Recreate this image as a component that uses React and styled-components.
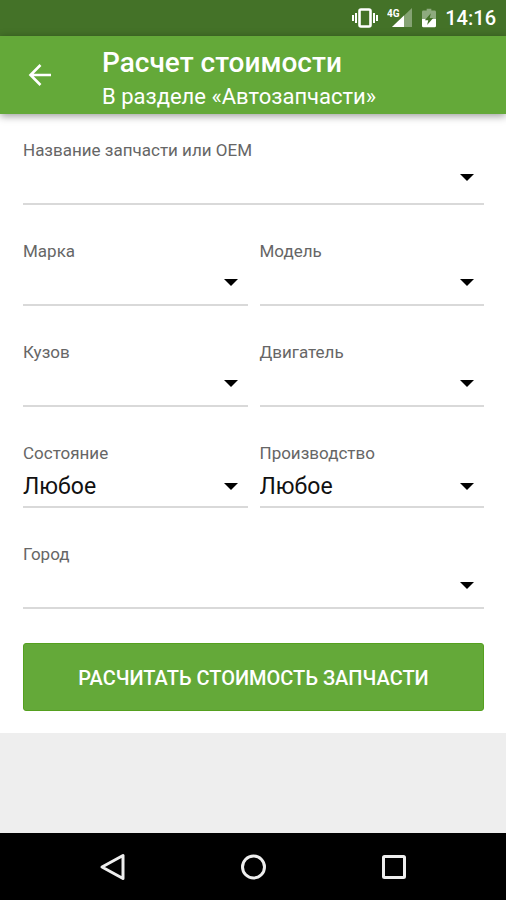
import styled, { createGlobalStyle } from "styled-components";

const ANY = "Любое";

const FIELDS = [
  { id: "part", label: "Название запчасти или ОЕМ", wide: true, lift: 8 },
  { id: "brand", label: "Марка" },
  { id: "model", label: "Модель" },
  { id: "body", label: "Кузов" },
  { id: "engine", label: "Двигатель" },
  { id: "condition", label: "Состояние", drop: 4, options: [ANY, "Новое", "Б/у"] },
  { id: "origin", label: "Производство", drop: 4, options: [ANY, "Оригинал", "Аналог"] },
  { id: "city", label: "Город", wide: true },
];

function StatusIcons() {
  return (
    <>
      <svg width="26" height="20" viewBox="0 0 26 20" fill="#fff" aria-hidden="true">
        <path d="M0 7h2v6H0zM3 5h2v10H3zM21 5h2v10h-2zM24 7h2v6h-2z" />
        <rect
          x="7.5"
          y="1.5"
          width="11"
          height="17"
          rx="1.5"
          fill="none"
          stroke="#fff"
          strokeWidth="2.6"
        />
      </svg>
      <svg width="26" height="20" viewBox="0 0 26 20" fill="#fff" aria-hidden="true">
        <path d="M25 0v19H5z" opacity="0.35" />
        <path d="M17 7.600V19H5z" />
        <text x="0" y="9" fontFamily="Roboto, sans-serif" fontSize="10" fontWeight="700">
          4G
        </text>
      </svg>
      <svg width="14" height="20" viewBox="0 0 15 20" fill="#fff" aria-hidden="true">
        <path
          d="M5 0h5v2h3.500q1.500 0 1.500 1.500V11H0V3.500Q0 2 1.500 2H5z"
          opacity="0.4"
        />
        <path d="M0 11h15v7.500q0 1.500-1.500 1.500h-12Q0 20 0 18.500z" />
        <path d="M9.500 5 3 12.500h3.700L5.500 17.500 12 10H8.300z" fill="#447228" />
      </svg>
    </>
  );
}

function Field({ field }) {
  const { id, label, wide, lift, drop, options = [""] } = field;

  return (
    <FieldBox $wide={wide}>
      <Label htmlFor={id}>{label}</Label>
      <Control $lift={lift} $drop={drop}>
        <Select id={id} name={id}>
          {options.map((option) => (
            <option key={option} value={option}>
              {option}
            </option>
          ))}
        </Select>
        <Caret viewBox="0 0 14 7" aria-hidden="true">
          <path d="M0 0h14L7 7z" />
        </Caret>
      </Control>
    </FieldBox>
  );
}

function App() {
  return (
    <Page>
      <GlobalStyle />
      <StatusBar>
        <StatusIcons />
        <Clock>14:16</Clock>
      </StatusBar>
      <Header>
        <BackButton type="button" aria-label="Назад">
          <svg width="24" height="24" viewBox="0 0 24 24" fill="none" stroke="#fff" strokeWidth="2.600">
            <path d="M23 12H2.500M12.500 2 2.500 12l10 10" />
          </svg>
        </BackButton>
        <div>
          <Title>Расчет стоимости</Title>
          <Subtitle>В разделе «Автозапчасти»</Subtitle>
        </div>
      </Header>
      <Form onSubmit={(e) => e.preventDefault()}>
        <Fields>
          {FIELDS.map((field) => (
            <Field key={field.id} field={field} />
          ))}
        </Fields>
        <Submit type="submit">РАСЧИТАТЬ СТОИМОСТЬ ЗАПЧАСТИ</Submit>
      </Form>
      <NavBar>
        <NavButton type="button" aria-label="Назад">
          <svg width="28" height="28" viewBox="0 0 28 28">
            <path d="M24 2.500v23L3 14z" />
          </svg>
        </NavButton>
        <NavButton type="button" aria-label="Домой">
          <svg width="28" height="28" viewBox="0 0 28 28">
            <circle cx="14.500" cy="14" r="11" />
          </svg>
        </NavButton>
        <NavButton type="button" aria-label="Недавние">
          <svg width="28" height="28" viewBox="0 0 28 28">
            <rect x="4.500" y="3.500" width="21" height="21" rx="1" />
          </svg>
        </NavButton>
      </NavBar>
    </Page>
  );
}

const GlobalStyle = createGlobalStyle`
  * {
    box-sizing: border-box;
  }

  body {
    margin: 0;
    font-family: Roboto, "Noto Sans", sans-serif;
    background: #eee;
  }

  button, select {
    font-family: inherit;
  }
`;

const Page = styled.div`
  display: flex;
  flex-direction: column;
  min-height: 100vh;
`;

const StatusBar = styled.div`
  display: flex;
  align-items: center;
  justify-content: flex-end;
  gap: 9px;
  height: 36px;
  padding-right: 10px;
  background: #447228;
`;

const Clock = styled.time`
  color: #fff;
  font-size: 20px;
  font-weight: 500;
  line-height: 24px;
`;

const Header = styled.header`
  display: flex;
  align-items: flex-start;
  gap: 50px;
  padding: 10px 28px 0;
  color: #fff;
  background: #64a939;
  box-shadow: 0 2px 8px rgba(0, 0, 0, 0.4);
  z-index: 1;
`;

const BackButton = styled.button`
  display: flex;
  align-items: center;
  height: 58px;
  padding: 0;
  border: 0;
  background: none;
`;

const Title = styled.h1`
  margin: 0;
  font-size: 28px;
  font-weight: 500;
  line-height: 34px;
`;

const Subtitle = styled.p`
  margin: 0;
  font-size: 22px;
  line-height: 34px;
`;

const Form = styled.form`
  padding: 26px 22px 22px 23px;
  background: #fff;
`;

const Fields = styled.div`
  display: grid;
  grid-template-columns: 1fr 1fr;
  gap: 36px 12px;
`;

const FieldBox = styled.div`
  grid-column: ${({ $wide }) => ($wide ? "1 / -1" : "auto")};
  display: flex;
  flex-direction: column;
  height: 65px;
  border-bottom: 2px solid #d9d9d9;
`;

const Label = styled.label`
  color: #666;
  font-size: 17px;
  line-height: 20px;
`;

const Control = styled.div`
  flex: 1;
  display: grid;
  align-items: center;
  padding-top: ${({ $drop = 0 }) => $drop}px;
  padding-bottom: ${({ $lift = 0 }) => $lift}px;

  > * {
    grid-area: 1 / 1;
  }
`;

const Select = styled.select`
  appearance: none;
  width: 100%;
  height: 34px;
  padding: 0 30px 0 0;
  border: 0;
  color: #111;
  font-size: 23px;
  background: none;
`;

const Caret = styled.svg`
  justify-self: end;
  width: 14px;
  height: 7px;
  margin-right: 10px;
  pointer-events: none;
`;

const Submit = styled.button`
  width: 100%;
  height: 68px;
  margin-top: 34px;
  padding-top: 2px;
  border: 1px solid #55a01f;
  border-radius: 3px;
  color: #fff;
  font-size: 20px;
  font-weight: 500;
  background: #64a939;
`;

const NavBar = styled.nav`
  display: flex;
  height: 67px;
  margin-top: auto;
  padding: 0 43px;
  background: #000;
`;

const NavButton = styled.button`
  flex: 1;
  display: flex;
  align-items: center;
  justify-content: center;
  padding: 0;
  border: 0;
  background: none;

  svg {
    fill: none;
    stroke: #eee;
    stroke-width: 3;
    stroke-linejoin: round;
  }
`;

export default App;
